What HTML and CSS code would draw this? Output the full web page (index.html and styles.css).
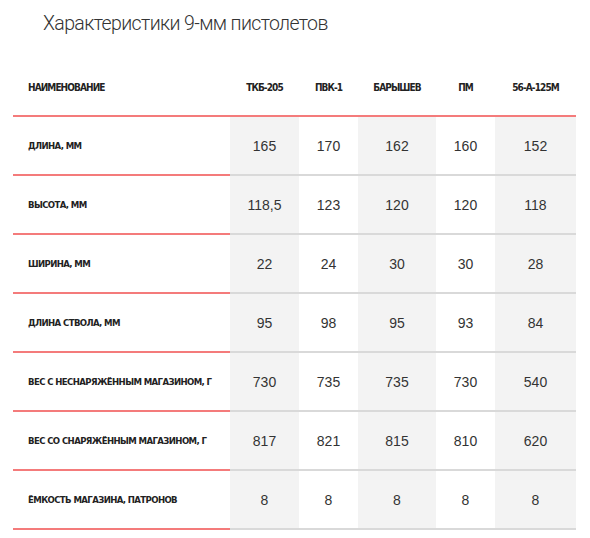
FILE: index.html
```html
<!DOCTYPE html>
<html lang="ru">
<head>
<meta charset="utf-8">
<link rel="stylesheet" href="styles.css">
</head>
<body>
<h1 class="title">Характеристики 9-мм пистолетов</h1>
<table class="specs">
  <colgroup>
    <col class="c-name">
    <col class="c-a">
    <col class="c-b">
    <col class="c-c">
    <col class="c-d">
    <col class="c-e">
  </colgroup>
  <thead>
    <tr>
      <th class="name">Наименование</th>
      <th>ТКБ-205</th>
      <th>ПВК-1</th>
      <th>Барышев</th>
      <th>ПМ</th>
      <th>56-А-125М</th>
    </tr>
  </thead>
  <tbody>
    <tr><td class="name">Длина, мм</td><td class="alt">165</td><td>170</td><td class="alt">162</td><td>160</td><td class="alt">152</td></tr>
    <tr><td class="name">Высота, мм</td><td class="alt">118,5</td><td>123</td><td class="alt">120</td><td>120</td><td class="alt">118</td></tr>
    <tr><td class="name">Ширина, мм</td><td class="alt">22</td><td>24</td><td class="alt">30</td><td>30</td><td class="alt">28</td></tr>
    <tr><td class="name">Длина ствола, мм</td><td class="alt">95</td><td>98</td><td class="alt">95</td><td>93</td><td class="alt">84</td></tr>
    <tr><td class="name">Вес с неснаряжённым магазином, г</td><td class="alt">730</td><td>735</td><td class="alt">735</td><td>730</td><td class="alt">540</td></tr>
    <tr><td class="name">Вес со снаряжённым магазином, г</td><td class="alt">817</td><td>821</td><td class="alt">815</td><td>810</td><td class="alt">620</td></tr>
    <tr><td class="name">Ёмкость магазина, патронов</td><td class="alt">8</td><td>8</td><td class="alt">8</td><td>8</td><td class="alt">8</td></tr>
  </tbody>
</table>
</body>
</html>
```

FILE: styles.css
```css
html, body {
  margin: 0;
  padding: 0;
  background: #ffffff;
}

body {
  font-family: "Liberation Sans", Arial, sans-serif;
  color: #333333;
}

.title {
  margin: 0;
  padding: 12px 0 0 43px;
  font-family: Roboto, "DejaVu Sans Condensed", sans-serif;
  font-weight: 300;
  font-size: 19.5px;
  line-height: 24px;
  letter-spacing: -0.62px;
  color: #333333;
}

.specs {
  margin: 24px 0 0 13px;
  width: 563px;
  table-layout: fixed;
  border-collapse: collapse;
  border-spacing: 0;
}

.c-name { width: 217px; }
.c-a { width: 69px; }
.c-b { width: 59px; }
.c-c { width: 78px; }
.c-d { width: 59px; }
.c-e { width: 81px; }

.specs th {
  height: 55px;
  padding: 0;
  font-family: "DejaVu Sans Condensed", "DejaVu Sans", sans-serif;
  font-weight: bold;
  font-size: 10px;
  letter-spacing: -0.9px;
  text-transform: uppercase;
  color: #222222;
  text-align: center;
  vertical-align: middle;
  border-bottom: 2px solid #f47b7b;
}

.specs th.name,
.specs td.name {
  text-align: left;
  padding-left: 15px;
}

.specs td {
  height: 57px;
  padding: 0;
  font-size: 14px;
  color: #333333;
  text-align: center;
  vertical-align: middle;
  border-bottom: 2px solid #d9d9d9;
}

.specs td.name {
  font-family: "DejaVu Sans Condensed", "DejaVu Sans", sans-serif;
  font-weight: bold;
  font-size: 9.5px;
  letter-spacing: -0.6px;
  text-transform: uppercase;
  white-space: nowrap;
  color: #222222;
  border-bottom-color: #f47b7b;
}

.specs td.alt {
  background: #f3f3f3;
}
```
